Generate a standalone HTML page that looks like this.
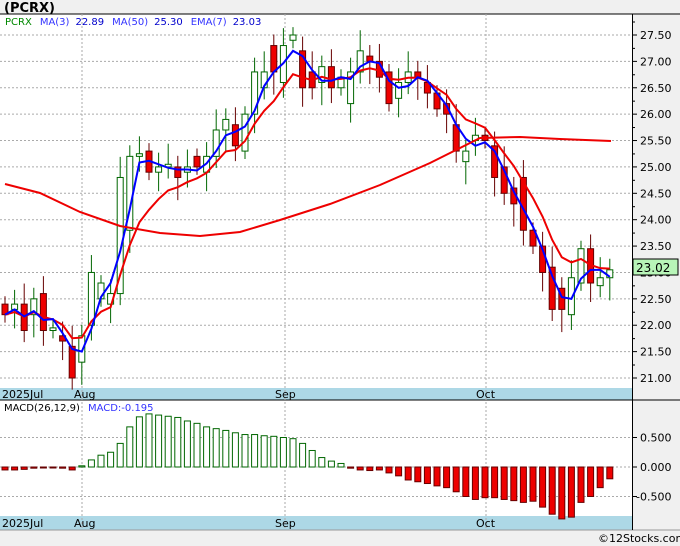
<!DOCTYPE html>
<html><head><style>
body{margin:0;width:680px;height:546px;background:#f0f0f0;overflow:hidden;font-family:"DejaVu Sans","Liberation Sans",sans-serif}
svg{position:absolute;left:0;top:0}
</style></head><body>
<svg id="s" width="680" height="546" xmlns="http://www.w3.org/2000/svg" font-family="DejaVu Sans, Liberation Sans, sans-serif"></svg>
<script>
const S=document.getElementById('s');let h='';
const py=p=>378-(p-21)*52.77, my=v=>467-v*59;
// panels
h+='<rect x="0" y="14" width="632" height="374" fill="#fff"/>';
h+='<rect x="0" y="400" width="632" height="116" fill="#fff"/>';
h+='<rect x="0" y="388" width="632" height="12" fill="#add8e6"/><rect x="0" y="516" width="632" height="14" fill="#add8e6"/>';
h+='<line x1="0" y1="14" x2="680" y2="14" stroke="#000"/>';
h+='<line x1="0" y1="400" x2="680" y2="400" stroke="#000"/>';
h+='<line x1="0" y1="530" x2="680" y2="530" stroke="#999"/>';
h+='<line x1="632.5" y1="14" x2="632.5" y2="530" stroke="#000"/>';
h+='<text x="4" y="12" font-size="13" font-weight="bold">(PCRX)</text>';
// grid
for(let p=21;p<=27.5;p+=0.5){const y=py(p);h+=`<line x1="0" y1="${y}" x2="632" y2="${y}" stroke="#aaa" stroke-dasharray="2,2"/><line x1="632" y1="${y}" x2="637" y2="${y}" stroke="#000"/><text x="640" y="${y+4}" font-size="11">${p.toFixed(2)}</text>`;
 h+=`<line x1="632" y1="${y-13}" x2="635" y2="${y-13}" stroke="#000"/>`;}
[0.5,0,-0.5].forEach(v=>{const y=my(v);h+=`<line x1="0" y1="${y}" x2="632" y2="${y}" stroke="#aaa" stroke-dasharray="2,2"/><line x1="632" y1="${y}" x2="637" y2="${y}" stroke="#000"/><text x="${v<0?636:640}" y="${y+4}" font-size="11">${v<0?'-':''}${Math.abs(v).toFixed(3)}</text>`;});
[82,285,486].forEach(x=>{h+=`<line x1="${x}" y1="14" x2="${x}" y2="530" stroke="#aaa" stroke-dasharray="2,2"/>`;});
h+='<text x="2" y="398" font-size="11">2025Jul</text><text x="74" y="398" font-size="11">Aug</text><text x="275" y="398" font-size="11">Sep</text><text x="476" y="398" font-size="11">Oct</text>';
h+='<text x="2" y="527" font-size="11">2025Jul</text><text x="74" y="527" font-size="11">Aug</text><text x="275" y="527" font-size="11">Sep</text><text x="476" y="527" font-size="11">Oct</text>';
h+='<text x="5" y="25" font-size="10"><tspan fill="#080">PCRX</tspan><tspan fill="#33f" dx="8">MA(3)</tspan><tspan fill="#00c" dx="6">22.89</tspan><tspan fill="#33f" dx="8">MA(50)</tspan><tspan fill="#00c" dx="6">25.30</tspan><tspan fill="#33f" dx="8">EMA(7)</tspan><tspan fill="#00c" dx="6">23.03</tspan></text>';
h+='<text x="4" y="411" font-size="10"><tspan>MACD(26,12,9)</tspan><tspan fill="#33f" dx="8">MACD:-0.195</tspan></text>';
// candles o,c
const d=[[22.4,22.2],[22.3,22.4],[22.4,21.9],[22.2,22.5],[22.6,21.9],[21.9,21.95],[21.8,21.7],[21.6,21.0],[21.3,21.8],[22.0,23.0],[22.5,22.8],[22.4,22.6],[22.6,24.8],[23.8,25.2],[25.2,25.25],[25.3,24.9],[24.9,25.0],[25.0,25.05],[25.0,24.8],[24.9,25.0],[25.2,25.0],[24.9,25.2],[25.2,25.7],[25.7,25.9],[25.8,25.4],[25.3,26.0],[26.0,26.8],[26.5,26.8],[27.3,26.8],[26.6,27.3],[27.4,27.5],[27.2,26.5],[26.8,26.5],[26.6,26.9],[26.9,26.5],[26.5,26.7],[26.2,26.8],[26.8,27.2],[27.1,27.0],[27.0,26.7],[26.8,26.2],[26.3,26.6],[26.6,26.8],[26.8,26.7],[26.6,26.4],[26.4,26.1],[26.2,26.0],[25.8,25.3],[25.1,25.3],[25.5,25.6],[25.6,25.5],[25.4,24.8],[25.0,24.5],[24.6,24.3],[24.8,23.8],[23.8,23.5],[23.5,23.0],[23.1,22.3],[22.7,22.3],[22.2,22.9],[22.8,23.45],[23.45,22.8],[22.75,22.9],[22.9,23.05]];
const X=i=>5+i*9.6;
d.forEach((c,i)=>{const x=X(i),o=c[0],cl=c[1],up=cl>=o;const hi=Math.max(o,cl)+0.15+((i*7)%5)*0.06,lo=Math.min(o,cl)-0.15-((i*3)%5)*0.07;
 h+=`<line x1="${x}" y1="${py(hi)}" x2="${x}" y2="${py(lo)}" stroke="${up?'#060':'#600'}"/>`;
 const t=py(Math.max(o,cl)),b=Math.max(py(Math.min(o,cl))-t,2);
 h+=`<rect x="${x-3}" y="${t}" width="6" height="${b}" fill="${up?'#fff':'#e00'}" stroke="${up?'#060':'#600'}" stroke-width="1"/>`;});
// MA3 and EMA7
const cl=d.map(c=>c[1]);let m3='',e7='',e=cl[0];
cl.forEach((c,i)=>{e=e+(c-e)*0.25;e7+=`${X(i)},${py(e)} `;const a=cl.slice(Math.max(0,i-2),i+1);m3+=`${X(i)},${py(a.reduce((s,v)=>s+v)/a.length)} `;});
h+=`<polyline points="${e7}" fill="none" stroke="#e00" stroke-width="2"/>`;
h+=`<polyline points="${m3}" fill="none" stroke="#00f" stroke-width="2"/>`;
h+='<polyline points="5,184 40,193 80,212 120,226 160,233 200,236 240,232 280,220 330,204 380,185 430,163 480,138 520,137 560,139 611,141" fill="none" stroke="#e00" stroke-width="2"/>';
// macd
const mv=[-0.05,-0.05,-0.04,-0.02,-0.01,-0.01,-0.02,-0.05,0.02,0.12,0.2,0.25,0.4,0.68,0.85,0.9,0.88,0.86,0.84,0.78,0.74,0.68,0.65,0.62,0.58,0.55,0.55,0.53,0.52,0.5,0.48,0.4,0.28,0.16,0.1,0.06,-0.02,-0.05,-0.06,-0.05,-0.1,-0.15,-0.22,-0.25,-0.28,-0.32,-0.35,-0.42,-0.5,-0.55,-0.52,-0.52,-0.55,-0.57,-0.6,-0.58,-0.68,-0.8,-0.88,-0.85,-0.6,-0.5,-0.35,-0.2];
mv.forEach((v,i)=>{const x=X(i);const y=v>=0?my(v):my(0);const hh=Math.max(Math.abs(v)*59,1);
 h+=`<rect x="${x-3}" y="${y}" width="6" height="${hh}" fill="${v>=0?'#fff':'#e00'}" stroke="${v>=0?'#060':'#600'}" stroke-width="1"/>`;});
h+='<rect x="633" y="259" width="45" height="16" fill="#b8f5b8" stroke="#000"/><text x="636" y="272" font-size="12">23.02</text>';
h+='<text x="598" y="542" font-size="11">©12Stocks.com</text>';
S.innerHTML=h;
</script>
</body></html>
